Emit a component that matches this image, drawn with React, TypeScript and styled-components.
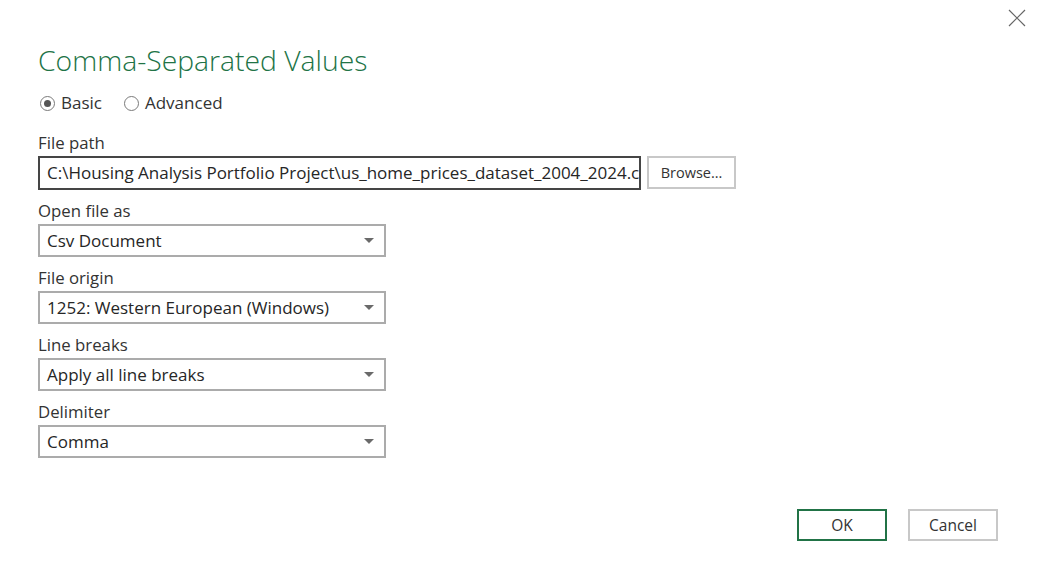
import React, { useState } from 'react';
import styled, { createGlobalStyle } from 'styled-components';

const GlobalStyle = createGlobalStyle`
    html, body {
        margin: 0;
        padding: 0;
        background: #ffffff;
    }
    body {
        font-family: "Open Sans", "Noto Sans", Arial, sans-serif;
        color: #333333;
    }
`;

const Dialog = styled.div`
    width: 1042px;
    height: 580px;
    box-sizing: border-box;
    background: #ffffff;
    display: flex;
    flex-direction: column;
    padding: 0 44px 39px 38px;
`;

const TopBar = styled.div`
    display: flex;
    justify-content: flex-end;
    height: 36px;
    margin-right: -29px;
    padding-top: 8px;
    box-sizing: border-box;
`;

const CloseButton = styled.button`
    width: 20px;
    height: 20px;
    padding: 0;
    border: none;
    background: transparent;
    cursor: pointer;
    display: flex;
    align-items: center;
    justify-content: center;
`;

const Title = styled.h1`
    margin: 6px 0 0 0;
    font-family: "Open Sans", "Noto Sans", sans-serif;
    font-weight: 300;
    font-size: 28.3px;
    line-height: 36px;
    color: #217346;
`;

const RadioRow = styled.div`
    display: flex;
    gap: 20px;
    margin-top: 13px;
`;

const RadioLabel = styled.label`
    display: flex;
    align-items: center;
    gap: 6px;
    font-size: 17px;
    line-height: 24px;
    color: #333333;
    cursor: pointer;
`;

const RadioDot = styled.span<{ checked: boolean }>`
    width: 13px;
    height: 13px;
    border-radius: 50%;
    border: 1px solid #7a7a7a;
    display: flex;
    align-items: center;
    justify-content: center;
    margin-left: 2px;

    &::after {
        content: '';
        width: 7px;
        height: 7px;
        border-radius: 50%;
        background: ${({ checked }) => (checked ? '#555555' : 'transparent')};
    }
`;

const Form = styled.div`
    display: flex;
    flex-direction: column;
    margin-top: 17px;
`;

const Field = styled.div`
    display: flex;
    flex-direction: column;
    gap: 2px;
    margin-bottom: 10px;
`;

const Label = styled.div`
    font-size: 16.8px;
    line-height: 22px;
    color: #333333;
`;

const PathRow = styled.div`
    display: flex;
    gap: 6px;
    align-items: flex-start;
`;

const PathInput = styled.div`
    width: 603px;
    height: 34px;
    box-sizing: border-box;
    border: 2px solid #454545;
    padding: 0 0 0 7px;
    font-size: 17px;
    line-height: 30px;
    white-space: nowrap;
    overflow: hidden;
    color: #262626;
`;

const Button = styled.button<{ primary?: boolean }>`
    height: 32px;
    box-sizing: border-box;
    background: #ffffff;
    border: 2px solid ${({ primary }) => (primary ? '#217346' : '#c8c8c8')};
    font-family: "Open Sans", "Noto Sans", sans-serif;
    font-size: 14.5px;
    color: #333333;
    padding: 0;
    cursor: pointer;
`;

const BrowseButton = styled(Button)`
    width: 89px;
    height: 33px;
`;

const Select = styled.div`
    width: 348px;
    height: 33px;
    box-sizing: border-box;
    border: 2px solid #ababab;
    padding: 0 10px 0 7px;
    display: flex;
    align-items: center;
    justify-content: space-between;
    font-size: 17px;
    color: #262626;
`;

const Arrow = styled.span`
    width: 0;
    height: 0;
    border-left: 5px solid transparent;
    border-right: 5px solid transparent;
    border-top: 5px solid #6a6a6a;
`;

const Footer = styled.div`
    margin-top: auto;
    display: flex;
    justify-content: flex-end;
    gap: 21px;
`;

const ActionButton = styled(Button)`
    width: 90px;
    font-size: 15.5px;
`;

const fields = [
    { label: 'Open file as', value: 'Csv Document' },
    { label: 'File origin', value: '1252: Western European (Windows)' },
    { label: 'Line breaks', value: 'Apply all line breaks' },
    { label: 'Delimiter', value: 'Comma' },
];

const App: React.FC = () => {
    const [mode, setMode] = useState<'basic' | 'advanced'>('basic');

    return (
        <>
            <GlobalStyle />
            <Dialog>
                <TopBar>
                    <CloseButton aria-label="Close">
                        <svg width="18" height="18" viewBox="0 0 18 18">
                            <path d="M1 1 L17 17 M17 1 L1 17" stroke="#666666" strokeWidth="1.2" fill="none" />
                        </svg>
                    </CloseButton>
                </TopBar>
                <Title>Comma-Separated Values</Title>
                <RadioRow>
                    <RadioLabel onClick={() => setMode('basic')}>
                        <RadioDot checked={mode === 'basic'} />
                        Basic
                    </RadioLabel>
                    <RadioLabel onClick={() => setMode('advanced')}>
                        <RadioDot checked={mode === 'advanced'} />
                        Advanced
                    </RadioLabel>
                </RadioRow>
                <Form>
                    <Field>
                        <Label>File path</Label>
                        <PathRow>
                            <PathInput>
                                C:\Housing Analysis Portfolio Project\us_home_prices_dataset_2004_2024.csv
                            </PathInput>
                            <BrowseButton>Browse...</BrowseButton>
                        </PathRow>
                    </Field>
                    {fields.map((f) => (
                        <Field key={f.label}>
                            <Label>{f.label}</Label>
                            <Select>
                                {f.value}
                                <Arrow />
                            </Select>
                        </Field>
                    ))}
                </Form>
                <Footer>
                    <ActionButton primary>OK</ActionButton>
                    <ActionButton>Cancel</ActionButton>
                </Footer>
            </Dialog>
        </>
    );
};

export default App;
